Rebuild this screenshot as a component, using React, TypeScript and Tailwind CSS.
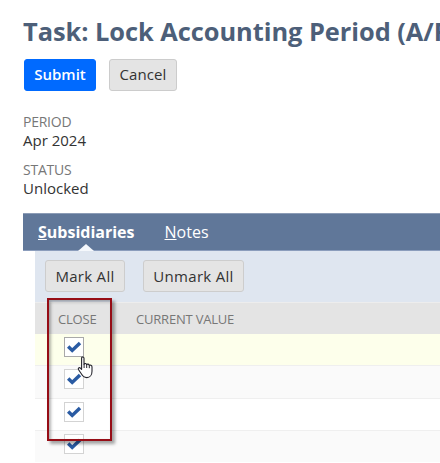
import React from "react";

const rows = [
  "h-8 bg-[#fdffeb]",
  "h-[33px] bg-[#fafafa]",
  "h-8 bg-white",
  "h-[31px] bg-[#fafafa] border-b-0",
];

function Checkbox({ active }: { active: boolean }) {
  return (
    <span
      className={`ml-[29px] mt-[3px] block h-5 w-5 shrink-0 border bg-white ${active ? "border-[#a9a9a9]" : "border-[#d3d3d3]"}`}
    >
      <svg viewBox="0 0 18 18" className="block h-[18px] w-[18px]">
        <path d="M3.2 8.6 L7.2 12.4 L15 5" fill="none" stroke="#2a5ba3" strokeWidth="3.5" />
      </svg>
    </span>
  );
}

function Field({ label, value }: { label: string; value: string }) {
  return (
    <div className="h-12">
      <div className="h-[19px] text-[14px] leading-[19px] tracking-[-0.25px] text-[#777777]">{label}</div>
      <div className="h-[19px] text-[15px] leading-[19px] text-[#333333]">{value}</div>
    </div>
  );
}

const button =
  "flex h-8 items-center justify-center rounded-[3px] border text-[15px]";

export default function App() {
  return (
    <div className="relative h-[463px] w-[440px] overflow-hidden bg-white pl-[23px] font-['Open_Sans',sans-serif]">
      <h1 className="h-[58px] whitespace-nowrap pt-[13px] text-[25.4px] font-bold leading-[36px] tracking-[-0.04px] text-[#4d5f79]">
        Task: Lock Accounting Period (A/R)
      </h1>
      <div className="flex gap-[13px] pl-px">
        <button className={`${button} mt-px w-[72px] border-[#006aff] bg-[#006aff] pb-0.5 font-semibold text-white`}>Submit</button>
        <button className={`${button} mt-px w-[68px] border-[#cccccc] bg-[#e4e4e4] pb-0.5 font-medium tracking-[0.1px] text-[#333333]`}>Cancel</button>
      </div>
      <div className="h-[122px] pt-[21px]">
        <Field label="PERIOD" value="Apr 2024" />
        <Field label="STATUS" value="Unlocked" />
      </div>
      <nav className="relative flex h-[38px] items-center gap-[30px] border-y border-t-[#8c9cb6] border-b-[#8b9dbc] bg-[#607799] pl-[15px] text-[16px] leading-[36px] text-white">
        <span className="font-bold"><u>S</u>ubsidiaries</span>
        <span><u>N</u>otes</span>
        <svg viewBox="0 0 16 7" className="absolute bottom-[-1px] left-[55px] h-[7px] w-4">
          <path d="M0 7 L8 0 L16 7Z" fill="#f5f8fc" />
        </svg>
      </nav>
      <div className="ml-3">
        <div className="flex h-[51px] gap-[18px] bg-[#dfe6f0] pl-[10px] pt-[9px]">
          <button className={`${button} w-20 border-[#cdcdcd] bg-[#e4e4e4] font-medium tracking-[0.3px] text-[#333333]`}>Mark All</button>
          <button className={`${button} w-[101px] border-[#cdcdcd] bg-[#e4e4e4] font-medium tracking-[0.3px] text-[#333333]`}>Unmark All</button>
        </div>
        <div className="flex h-8 border-t border-[#ededed] bg-[#e4e4e4] pl-[23px] text-[13px] leading-[33px] tracking-[-0.2px] text-[#777777]">
          <span className="w-[78px]">CLOSE</span>
          <span>CURRENT VALUE</span>
        </div>
        {rows.map((row, i) => (
          <div key={i} className={`flex border-b border-[#efefef] ${row}`}>
            <Checkbox active={i === 0} />
          </div>
        ))}
      </div>
      <div className="absolute left-[47px] top-[298px] h-[143px] w-[65px] border-2 border-[#960d16] shadow-[3px_3px_3px_rgba(0,0,0,0.35),inset_2px_2px_3px_rgba(0,0,0,0.3)]" />
      <svg viewBox="0 0 17 23" className="absolute left-[77px] top-[356px] h-[23px] w-[17px]">
        <path
          d="M4.6 2.2C4.6 .5 7 .5 7 2.2V8.2C7.5 7 9.4 7.3 9.6 8.7C10.3 7.7 12 8 12.2 9.4C13.2 8.7 15 9.2 15 11V15.2C15 18.8 13 21.6 9.8 21.6C6.6 21.6 5.4 19.8 4.3 17.8L1.6 13.8C.6 12.3 2.2 11 3.4 12.1L4.6 13.3Z"
          fill="white"
          stroke="#24242c"
          strokeWidth="1.1"
          strokeLinejoin="round"
        />
        <path d="M7.1 8V12M9.7 8.8V12M12.3 9.5V12.2" stroke="#24242c" strokeWidth="1" />
      </svg>
    </div>
  );
}
